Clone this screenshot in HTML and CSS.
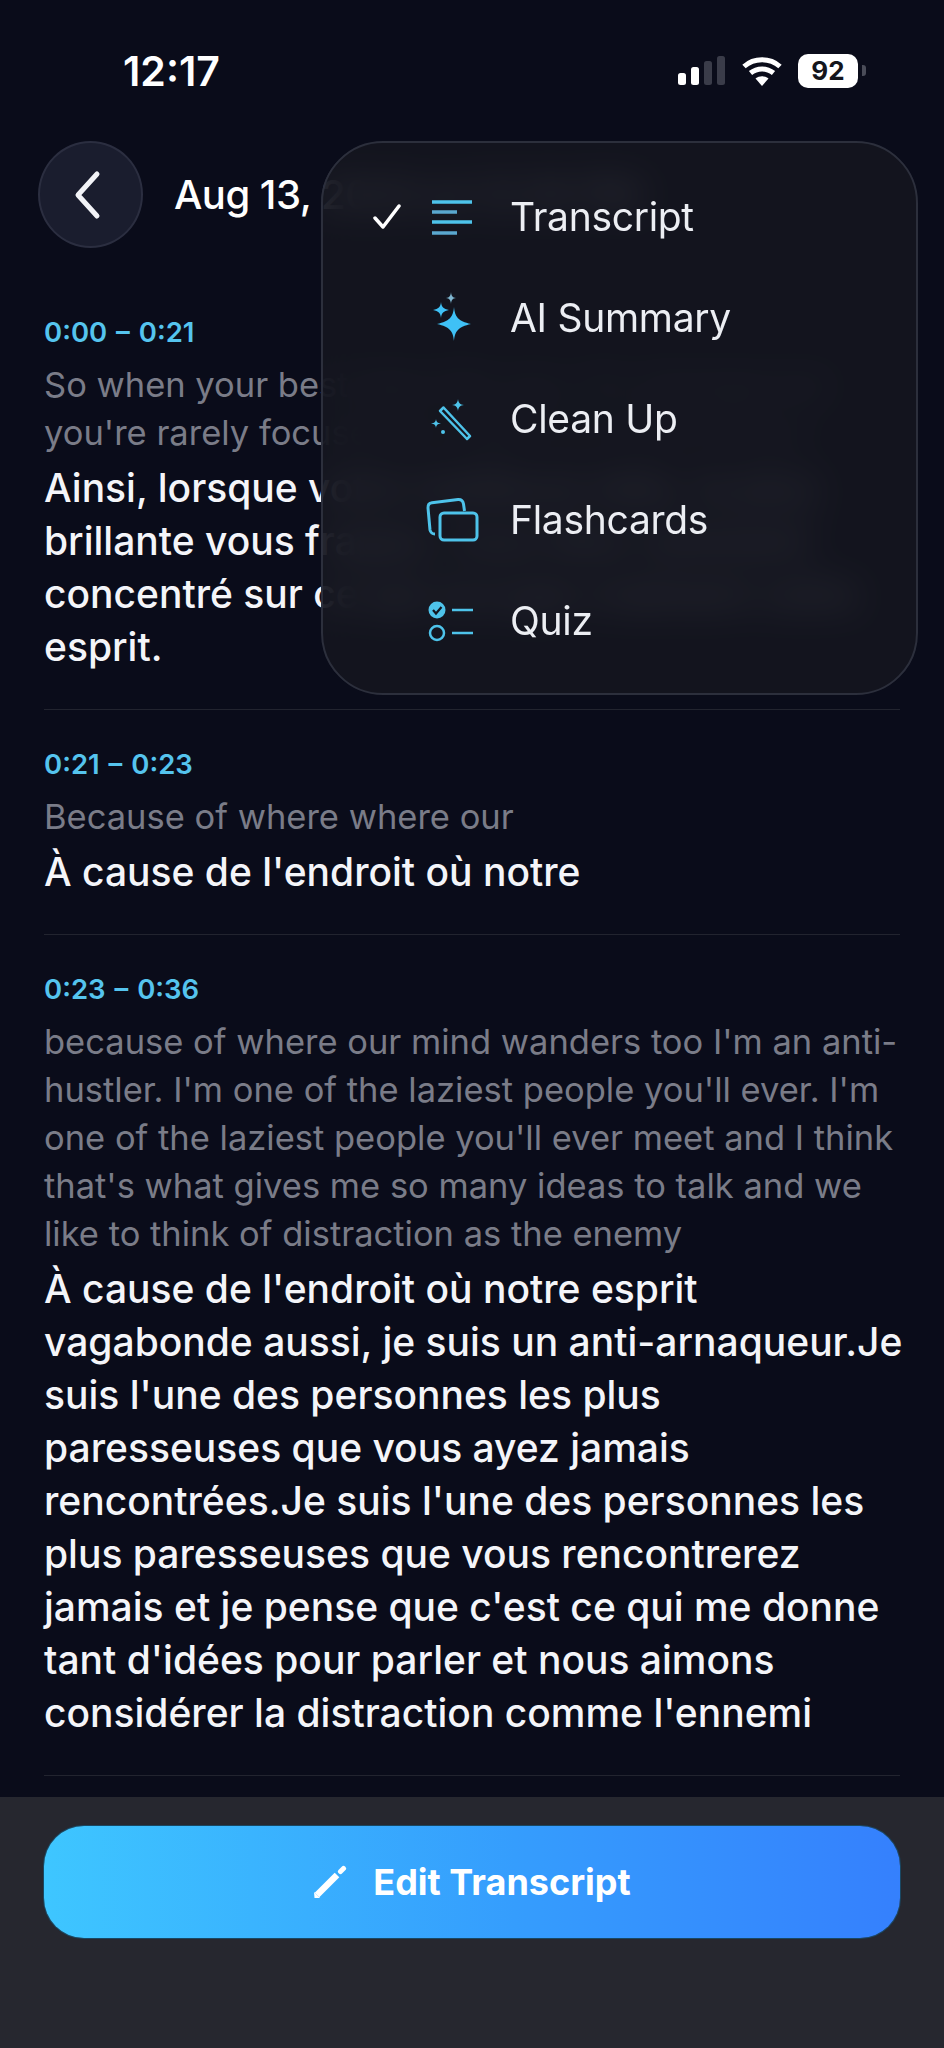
FILE: index.html
```html
<!DOCTYPE html>
<html lang="en">
<head>
  <meta charset="UTF-8" />
  <meta name="viewport" content="width=device-width, initial-scale=1.0"/>
  <title>Transcript</title>
  <link rel="stylesheet" href="styles.css">
</head>
<body>
  <div class="status-bar">
    <span class="status-time">12:17</span>
    <div class="status-icons">
      <svg class="signal" width="48" height="32" viewBox="0 0 48 32">
        <rect x="0" y="18" width="8" height="12" rx="2.5" fill="#fff"/>
        <rect x="13" y="12" width="8" height="18" rx="2.5" fill="#fff"/>
        <rect x="26" y="6" width="8" height="24" rx="2.5" fill="#3a3c49"/>
        <rect x="39" y="1" width="8" height="29" rx="2.5" fill="#3a3c49"/>
      </svg>
      <svg class="wifi" width="40" height="30" viewBox="0 0 40 30">
        <path d="M2 10.5C12 1.500 28 1.500 38 10.500" fill="none" stroke="#fff" stroke-width="5"/>
        <path d="M8.500 17C15 11.500 25 11.500 31.500 17" fill="none" stroke="#fff" stroke-width="5"/>
        <path d="M13.500 22.500C17.500 19.500 22.500 19.500 26.500 22.500L20 30Z" fill="#fff"/>
      </svg>
      <div class="battery">
        <span class="battery-level">92</span>
        <span class="battery-nub"></span>
      </div>
    </div>
  </div>

  <header class="top-bar">
    <button class="back-btn" type="button">
      <svg width="30" height="50" viewBox="0 0 30 50">
        <path d="M25 4L6 25L25 46" fill="none" stroke="#f2f3f7" stroke-width="5" stroke-linecap="round" stroke-linejoin="round"/>
      </svg>
    </button>
    <h1 class="top-title">Aug 13, 2024 at 12:16 PM</h1>
  </header>

  <main class="transcript">
    <section class="segment">
      <div class="seg-time">0:00 – 0:21</div>
      <p class="seg-source">So when your best idea hits you, it's strange but you're rarely focused on what is in front of you</p>
      <p class="seg-target">Ainsi, lorsque votre meilleure idée, la plus brillante vous frappe, vous êtes rarement concentré sur ce qui occupe vraiment votre esprit.</p>
    </section>
    <section class="segment">
      <div class="seg-time">0:21 – 0:23</div>
      <p class="seg-source">Because of where where our</p>
      <p class="seg-target">À cause de l'endroit où notre</p>
    </section>
    <section class="segment">
      <div class="seg-time">0:23 – 0:36</div>
      <p class="seg-source">because of where our mind wanders too I'm an anti-hustler. I'm one of the laziest people you'll ever. I'm one of the laziest people you'll ever meet and I think that's what gives me so many ideas to talk and we like to think of distraction as the enemy</p>
      <p class="seg-target">À cause de l'endroit où notre esprit vagabonde aussi, je suis un anti-arnaqueur.Je suis l'une des personnes les plus paresseuses que vous ayez jamais rencontrées.Je suis l'une des personnes les plus paresseuses que vous rencontrerez jamais et je pense que c'est ce qui me donne tant d'idées pour parler et nous aimons considérer la distraction comme l'ennemi</p>
    </section>
  </main>

  <footer class="bottom-bar">
    <button class="edit-btn" type="button">
      <svg width="34" height="34" viewBox="0 0 34 34">
        <path d="M4 30L24 10" fill="none" stroke="#fff" stroke-width="6.500"/>
        <path d="M27.500 6.500L30.500 3.500" fill="none" stroke="#fff" stroke-width="5" stroke-linecap="round"/>
        <path d="M1.500 33L1 27L7 33Z" fill="#fff"/>
      </svg>
      Edit Transcript
    </button>
  </footer>

  <!-- view menu, sits over the header and first segment -->
  <nav class="view-menu">
    <div class="menu-item">
      <svg class="menu-check" width="28" height="26" viewBox="0 0 28 26">
        <path d="M2 14L10 23L26 2" fill="none" stroke="#fff" stroke-width="3.500" stroke-linecap="round" stroke-linejoin="round"/>
      </svg>
      <svg class="menu-icon" width="56" height="44" viewBox="0 0 56 44">
        <path d="M7 7H47M7 27H47" fill="none" stroke="#4ec3ea" stroke-width="3.500"/>
        <path d="M7 17H32M7 38H32" fill="none" stroke="#5aa8cf" stroke-width="3.500"/>
      </svg>
      <span>Transcript</span>
    </div>
    <div class="menu-item">
      <svg class="menu-icon" width="56" height="56" viewBox="0 0 56 56">
        <path d="M29 17C30 27 33 31 46 34C33 37 30 41 29 51C28 41 25 37 12 34C25 31 28 27 29 17Z" fill="#3fc1f6"/>
        <path d="M16 12C16.500 17 18.500 19 24 20C18.500 21 16.500 23 16 28C15.500 23 13.500 21 8 20C13.500 19 15.500 17 16 12Z" fill="#3fc1f6"/>
        <path d="M26 2C26.400 6 27.500 7.500 31 8C27.500 8.500 26.400 10 26 14C25.600 10 24.500 8.500 21 8C24.500 7.500 25.600 6 26 2Z" fill="#7fb6d0"/>
      </svg>
      <span>AI Summary</span>
    </div>
    <div class="menu-item">
      <svg class="menu-icon" width="56" height="56" viewBox="0 0 56 56">
        <path d="M15 20L18.500 16.500L45 45L42 48Z" fill="none" stroke="#4ec3ea" stroke-width="2.500" stroke-linejoin="round"/>
        <path d="M33 8C33.500 12 35 13.500 39 14C35 14.500 33.500 16 33 20C32.500 16 31 14.500 27 14C31 13.500 32.500 12 33 8Z" fill="#4ec3ea"/>
        <path d="M11 28C11.400 31 12.500 32 16 32.500C12.500 33 11.400 34 11 37C10.600 34 9.500 33 6 32.500C9.500 32 10.600 31 11 28Z" fill="#4ec3ea"/>
        <circle cx="18" cy="41" r="2" fill="#4ec3ea"/>
      </svg>
      <span>Clean Up</span>
    </div>
    <div class="menu-item">
      <svg class="menu-icon" width="56" height="48" viewBox="0 0 56 48">
        <path d="M10 38C7 38 5.500 36 5 34L3 12C2.800 9 4.500 7 7 6.700L33 3.500C36 3.300 38 5 38.500 8L39.500 15" fill="none" stroke="#4ec3ea" stroke-width="3"/>
        <rect x="15" y="17" width="37" height="27" rx="4" fill="none" stroke="#4ec3ea" stroke-width="3"/>
      </svg>
      <span>Flashcards</span>
    </div>
    <div class="menu-item">
      <svg class="menu-icon" width="56" height="48" viewBox="0 0 56 48">
        <circle cx="12" cy="13" r="8.500" fill="#4ec3ea"/>
        <path d="M8 13L11 16.500L16.500 10" fill="none" stroke="#14161f" stroke-width="2.200"/>
        <circle cx="12" cy="36" r="7" fill="none" stroke="#4ec3ea" stroke-width="2.500"/>
        <path d="M27 13H48M27 36H48" fill="none" stroke="#4ec3ea" stroke-width="2.500"/>
      </svg>
      <span>Quiz</span>
    </div>
  </nav>
</body>
</html>
```

FILE: styles.css
```css
* {
  box-sizing: border-box;
}
html, body {
  height: 100%;
}
body {
  font-family: Inter, "Noto Sans", Arial, sans-serif;
  margin: 0;
  background-color: #0a0c1a;
  color: #fff;
  display: flex;
  flex-direction: column;
  overflow: hidden;
  position: relative;
}

/* status bar */
.status-bar {
  display: flex;
  justify-content: space-between;
  align-items: center;
  flex-shrink: 0;
  height: 141px;
  padding: 0 78px 0 123px;
}
.status-time {
  font-size: 41px;
  font-weight: 600;
}
.status-icons {
  display: flex;
  align-items: center;
  gap: 16px;
}
.battery {
  display: flex;
  align-items: center;
  gap: 4px;
}
.battery-level {
  background-color: #fff;
  color: #14151c;
  font-size: 26px;
  font-weight: 700;
  width: 60px;
  height: 34px;
  line-height: 34px;
  border-radius: 10px;
  text-align: center;
}
.battery-nub {
  width: 4px;
  height: 11px;
  border-radius: 0 3px 3px 0;
  background-color: #4a4c58;
}

/* header */
.top-bar {
  display: flex;
  align-items: center;
  flex-shrink: 0;
  gap: 31px;
  padding: 0 38px;
  height: 107px;
}
.back-btn {
  width: 105px;
  height: 107px;
  flex-shrink: 0;
  border-radius: 50%;
  background-color: #1a1d2e;
  border: 2px solid #2b2e40;
  display: flex;
  align-items: center;
  justify-content: center;
  padding: 0 8px 0 0;
}
.top-title {
  margin: 0;
  font-size: 40px;
  font-weight: 500;
  letter-spacing: -0.5px;
  white-space: nowrap;
}

/* transcript */
.transcript {
  flex: 1;
  min-height: 0;
  padding: 65px 44px 0;
}
.segment {
  padding: 0 0 36px;
  margin-bottom: 35px;
  border-bottom: 1px solid #22242f;
}
.seg-time {
  color: #55c4ee;
  font-size: 27.5px;
  font-weight: 600;
  line-height: 34px;
  padding-top: 2px;
  margin-bottom: 12px;
  word-spacing: 2px;
}
.seg-source {
  margin: 0 0 4px;
  color: #7a7c88;
  font-size: 34.5px;
  line-height: 48px;
}
.seg-target {
  margin: 0 -6px 0 0;
  color: #f4f5f9;
  font-size: 39px;
  font-weight: 500;
  line-height: 53px;
}

/* bottom */
.bottom-bar {
  height: 251px;
  flex-shrink: 0;
  padding: 29px 44px 0;
  background-color: #26272f;
}
.edit-btn {
  width: 100%;
  height: 112px;
  border: none;
  border-radius: 40px;
  background: linear-gradient(90deg, #3ec6ff 0%, #359dfd 55%, #3580fd 100%);
  box-shadow: 0 0 0 1px rgba(20, 85, 120, 0.7);
  color: #fff;
  font-family: inherit;
  font-size: 36px;
  font-weight: 700;
  display: flex;
  align-items: center;
  justify-content: center;
  gap: 26px;
}

/* popup menu */
.view-menu {
  position: absolute;
  left: 321px;
  top: 141px;
  width: 597px;
  height: 554px;
  padding: 23px 0 22px;
  border-radius: 62px;
  border: 2px solid #2c2f3c;
  background-color: rgba(20, 22, 31, 0.88);
  backdrop-filter: blur(18px);
  display: flex;
  flex-direction: column;
}
.menu-item {
  position: relative;
  flex: 1;
  display: flex;
  align-items: center;
  padding-left: 187px;
  font-size: 39px;
  color: #eceef3;
  letter-spacing: -0.3px;
}
.menu-check {
  position: absolute;
  left: 50px;
  top: 50%;
  margin-top: -13px;
}
.menu-icon {
  position: absolute;
  left: 102px;
  top: 50%;
  transform: translateY(-50%);
}
```
